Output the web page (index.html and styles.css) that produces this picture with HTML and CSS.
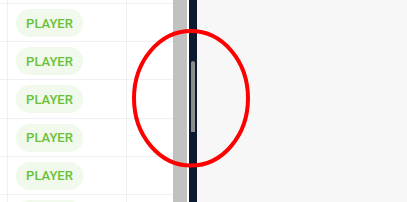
FILE: index.html
```html
<!DOCTYPE html>
<html>
<head>
<meta charset="utf-8">
<link rel="stylesheet" href="styles.css">
</head>
<body>
<div class="screen">
  <div class="table">
    <div class="row"><div class="c0"></div><div class="c1"><span class="tag">PLAYER</span></div><div class="c2"></div></div>
    <div class="row"><div class="c0"></div><div class="c1"><span class="tag">PLAYER</span></div><div class="c2"></div></div>
    <div class="row"><div class="c0"></div><div class="c1"><span class="tag">PLAYER</span></div><div class="c2"></div></div>
    <div class="row"><div class="c0"></div><div class="c1"><span class="tag">PLAYER</span></div><div class="c2"></div></div>
    <div class="row"><div class="c0"></div><div class="c1"><span class="tag">PLAYER</span></div><div class="c2"></div></div>
    <div class="row"><div class="c0"></div><div class="c1"><span class="tag">PLAYER</span></div><div class="c2"></div></div>
    <div class="row"><div class="c0"></div><div class="c1"><span class="tag">PLAYER</span></div><div class="c2"></div></div>
  </div>
  <div class="gutter"></div>
  <div class="gap"></div>
  <div class="rail"><div class="thumb"></div></div>
  <div class="pane"></div>
  <svg class="mark" width="407" height="202" viewBox="0 0 407 202">
    <ellipse cx="191" cy="98.3" rx="57" ry="67.3" fill="none" stroke="#ff0000" stroke-width="4"/>
  </svg>
</div>
</body>
</html>
```
FILE: styles.css
```css
html, body {
  margin: 0;
  padding: 0;
}
body {
  width: 407px;
  height: 202px;
  overflow: hidden;
  font-family: Roboto, "Liberation Sans", sans-serif;
}
.screen {
  position: relative;
  display: flex;
  width: 407px;
  height: 202px;
  overflow: hidden;
}
.table {
  width: 173px;
  flex: none;
  background: #ffffff;
  display: flex;
  flex-direction: column;
  margin-top: -34.2px;
}
.row {
  display: flex;
  flex: none;
  height: 38.2px;
  box-sizing: border-box;
  border-bottom: 1px solid #eef0f3;
}
.c0 {
  width: 8px;
  flex: none;
  box-sizing: border-box;
  border-right: 1px solid #eef0f3;
}
.c1 {
  width: 119px;
  flex: none;
  box-sizing: border-box;
  border-right: 1px solid #eef0f3;
  display: flex;
  align-items: center;
  padding-left: 8px;
  padding-top: 1px;
}
.c2 {
  flex: 1;
}
.tag {
  display: inline-flex;
  align-items: center;
  justify-content: center;
  height: 28px;
  width: 67px;
  box-sizing: border-box;
  border-radius: 14px;
  background: #f0f9eb;
  color: #67c23a;
  font-size: 13px;
  font-weight: 500;
  letter-spacing: 0;
}
.gutter {
  width: 14px;
  flex: none;
  background: #c1c1c1;
}
.gap {
  width: 2px;
  flex: none;
  background: #ffffff;
}
.rail {
  width: 8px;
  flex: none;
  background: #0b1a30;
  padding: 61px 0 0 2px;
  box-sizing: border-box;
}
.thumb {
  width: 4px;
  height: 71px;
  border-radius: 2px 2px 0 0;
  background: #8c8c8c;
}
.pane {
  flex: 1;
  background: #f7f7f7;
}
.mark {
  position: absolute;
  left: 0;
  top: 0;
  pointer-events: none;
}
```
